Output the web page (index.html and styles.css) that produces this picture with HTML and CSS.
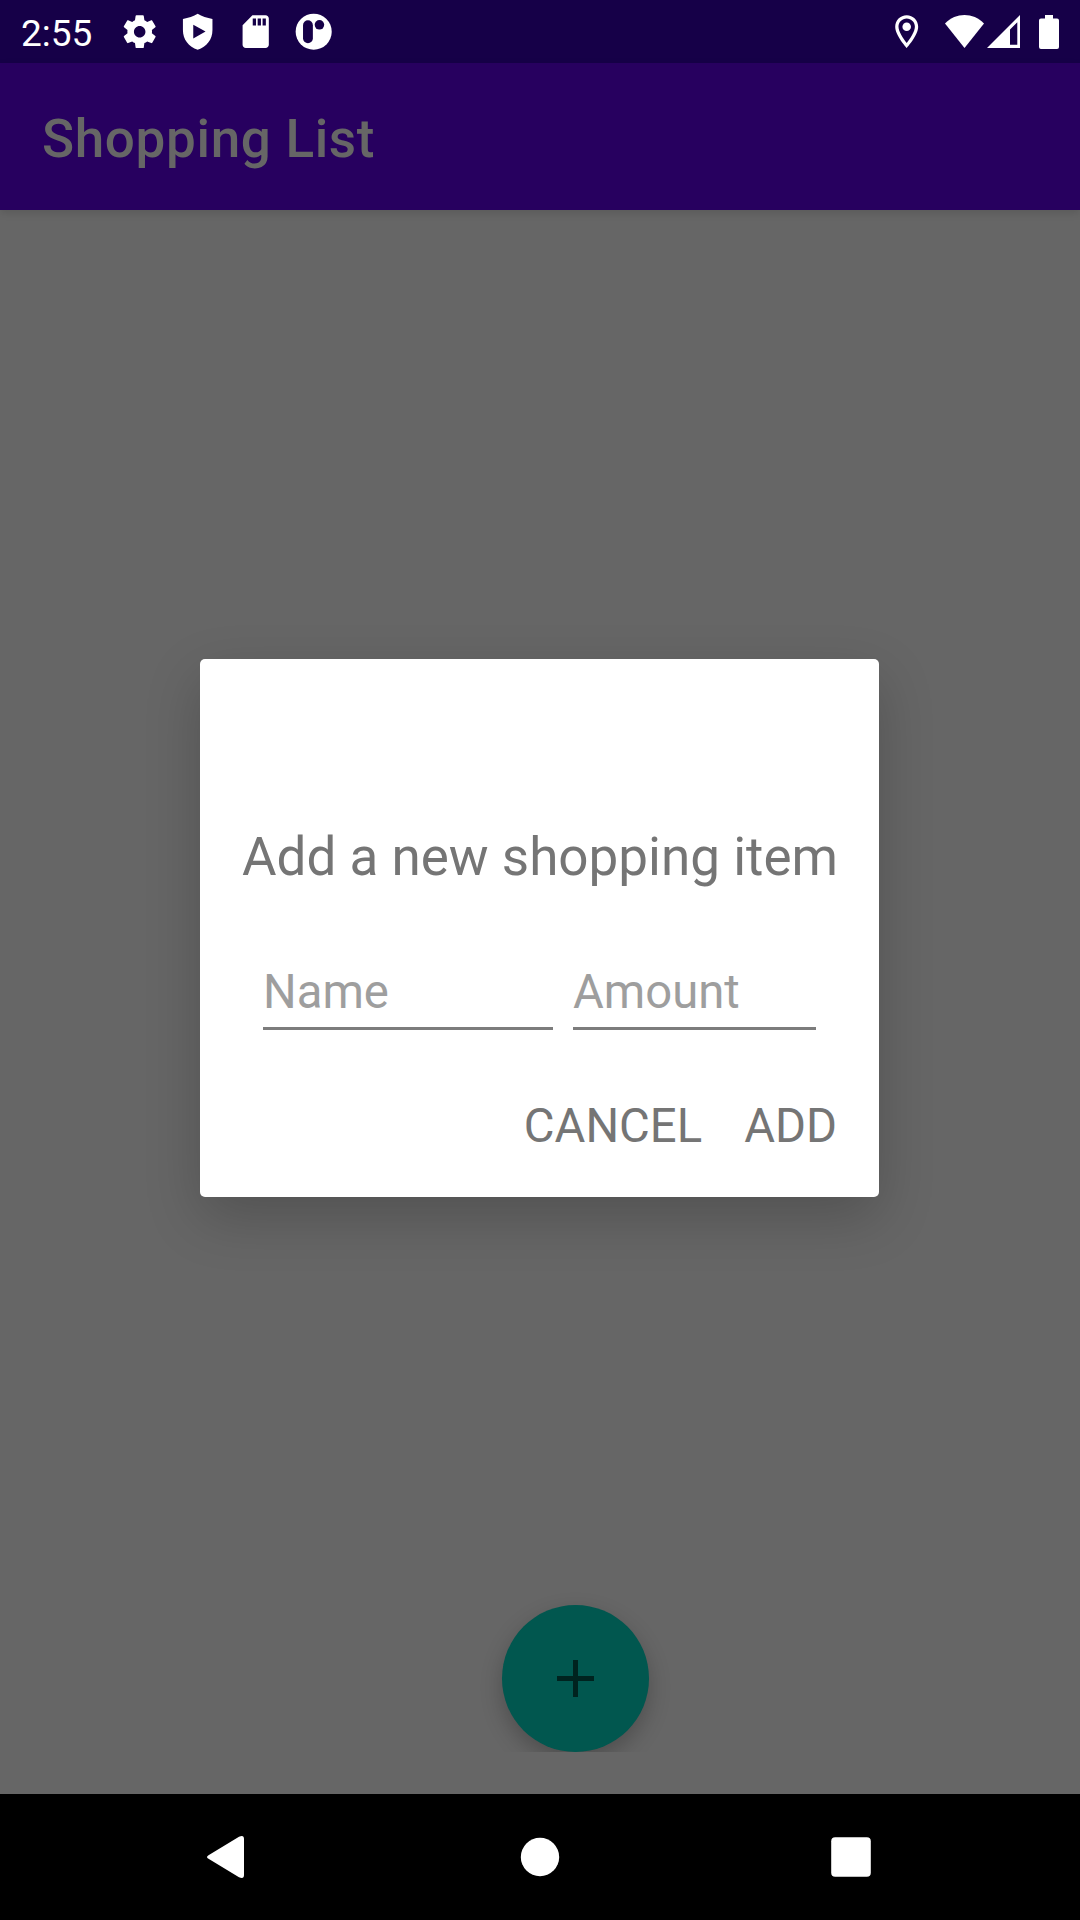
FILE: index.html
```html
<!DOCTYPE html>
<html lang="en">
<head>
<meta charset="utf-8">
<title>Shopping List</title>
<link rel="stylesheet" href="styles.css">
</head>
<body>
<div class="screen">
  <header class="status-bar">
    <span class="clock">2:55</span>
    <div class="notifications">
      <svg class="icon" viewBox="0 0 24 24"><path d="M19.43 12.98c.04-.32.07-.64.07-.98s-.03-.66-.07-.98l2.11-1.65c.19-.15.24-.42.12-.64l-2-3.46c-.12-.22-.39-.3-.61-.22l-2.49 1c-.52-.4-1.08-.73-1.69-.98l-.38-2.65C14.46 2.18 14.25 2 14 2h-4c-.25 0-.46.18-.49.42l-.38 2.65c-.61.25-1.17.59-1.69.98l-2.49-1c-.23-.09-.49 0-.61.22l-2 3.46c-.13.22-.07.49.12.64l2.11 1.65c-.04.32-.07.65-.07.98s.03.66.07.98l-2.11 1.65c-.19.15-.24.42-.12.64l2 3.46c.12.22.39.3.61.22l2.49-1c.52.4 1.08.73 1.69.98l.38 2.65c.03.24.24.42.49.42h4c.25 0 .46-.18.49-.42l.38-2.65c.61-.25 1.17-.59 1.69-.98l2.49 1c.23.09.49 0 .61-.22l2-3.46c.12-.22.07-.49-.12-.64l-2.11-1.65zM12 15.5c-1.93 0-3.5-1.57-3.5-3.5s1.57-3.5 3.5-3.5 3.5 1.57 3.5 3.5-1.57 3.5-3.5 3.5z"/></svg>
      <svg class="icon" viewBox="0 0 24 24"><path fill-rule="evenodd" d="M12 1.1C9.5 2.6 6.300 3.800 3 4.200V11c0 5.900 3.500 10.200 9 12 5.500-1.800 9-6.100 9-12V4.200C17.700 3.800 14.500 2.600 12 1.100zM9.300 7.700l7.500 4.200-7.500 4.200z"/></svg>
      <svg class="icon" viewBox="0 0 24 24"><path fill-rule="evenodd" d="M18 2h-8L4.020 8 4 20c0 1.100.9 2 2 2h12c1.100 0 2-.9 2-2V4c0-1.100-.9-2-2-2zM10.200 4h2v4.200h-2zM13.200 4h2v4.200h-2zM16.200 4h2v4.200h-2z"/></svg>
      <svg class="icon" viewBox="0 0 24 24"><circle cx="12" cy="12" r="11"/><rect class="hole" x="5.500" y="5" width="6" height="14" rx="3"/><circle class="hole" cx="15.500" cy="7.800" r="2.900"/></svg>
    </div>
    <div class="system">
      <svg class="icon location" viewBox="0 0 24 24"><path d="M12 2C8.130 2 5 5.130 5 9c0 5.250 7 13 7 13s7-7.750 7-13c0-3.870-3.130-7-7-7zM7 9c0-2.760 2.240-5 5-5s5 2.240 5 5c0 2.880-2.880 7.190-5 9.880C9.920 16.210 7 11.850 7 9z"/><circle cx="12" cy="9" r="2.600"/></svg>
      <svg class="wifi" viewBox="0 0 39 33"><path d="M0 8.500C11 -2.800 28 -2.800 39 8.500L19.500 33z"/></svg>
      <svg class="signal" viewBox="0 0 33 33"><path fill-rule="evenodd" d="M33 0v33H0zM30.300 7.200L23 14.500V29.800h7.300z"/></svg>
      <svg class="battery" viewBox="0 0 20 34"><path d="M6 0h8v3.500h4a2 2 0 0 1 2 2V32a2 2 0 0 1-2 2H2a2 2 0 0 1-2-2V5.500a2 2 0 0 1 2-2h4z"/></svg>
    </div>
  </header>
  <div class="app-bar"><h1 class="app-title">Shopping List</h1></div>
  <main class="content">
    <button class="fab" aria-label="Add"><svg class="plus" viewBox="0 0 37 37"><path d="M16 0h5v16h16v5H21v16h-5V21H0v-5h16z"/></svg></button>
  </main>
  <nav class="nav-bar">
    <svg class="nav-icon" viewBox="0 0 80 80"><path d="M22.500 38.200L53 19.800Q58 17.500 58 22V58Q58 62.500 53 60.200L22.500 41.800Q19.500 40 22.500 38.200z"/></svg>
    <svg class="nav-icon" viewBox="0 0 80 80"><circle cx="40" cy="40" r="19.200"/></svg>
    <svg class="nav-icon" viewBox="0 0 80 80"><rect x="17.200" y="20.200" width="39.600" height="39.600" rx="4"/></svg>
  </nav>
  <div class="dialog-layer">
    <section class="dialog">
      <h2 class="dialog-title">Add a new shopping item</h2>
      <div class="fields">
        <input class="field name" placeholder="Name">
        <input class="field amount" placeholder="Amount">
      </div>
      <div class="actions"><span>CANCEL</span><span>ADD</span></div>
    </section>
  </div>
</div>
</body>
</html>
```

FILE: styles.css
```css
* { box-sizing: border-box; }
body { margin: 0; font-family: Roboto, "Liberation Sans", sans-serif; }
svg { display: block; }
.screen {
  position: relative;
  display: flex;
  flex-direction: column;
  width: 1080px;
  height: 1920px;
  overflow: hidden;
  background: #666;
}

.status-bar {
  display: flex;
  align-items: center;
  height: 63px;
  padding: 0 21px;
  background: #160048;
  color: #fff;
  fill: #fff;
}
.clock { width: 99.3px; padding-top: 5px; font-size: 37px; line-height: 44px; }
.notifications { display: flex; gap: 18.6px; }
.icon { width: 39.375px; height: 39.375px; }
.hole { fill: #160048; }
.system { display: flex; align-items: center; margin-left: auto; }
.location { margin-right: 19px; }
.wifi { width: 39px; height: 33px; margin-right: 3px; }
.signal { width: 33px; height: 33px; margin-right: 19px; }
.battery { width: 20px; height: 34px; }

.app-bar {
  z-index: 1;
  height: 147px;
  padding: 41px 42px 0;
  background: #27005f;
  box-shadow: 0 3px 8px rgba(0, 0, 0, .12);
}
.app-title { margin: 0; color: #666; font-size: 53px; font-weight: 500; letter-spacing: .0125em; line-height: 70px; }

.content {
  display: flex;
  flex: 1;
  align-items: flex-end;
  padding-left: 502px;
  margin-bottom: 42px;
  overflow: hidden;
}
.fab {
  display: grid;
  place-items: center;
  width: 147px;
  height: 147px;
  padding: 0;
  border: 0;
  border-radius: 50%;
  background: #01574f;
  box-shadow: 0 9px 22px rgba(0, 0, 0, .24);
}
.plus { width: 37px; height: 37px; fill: #00231f; }

.nav-bar {
  display: flex;
  justify-content: space-between;
  height: 126px;
  padding: 23px 186px;
  background: #000;
  fill: #fff;
}
.nav-icon { width: 80px; height: 80px; }

.dialog-layer {
  position: absolute;
  z-index: 2;
  inset: 63px 1px 127px 0;
  display: grid;
  place-items: center;
}
.dialog {
  width: 679px;
  height: 538px;
  padding: 163px 42px 0;
  border-radius: 5px;
  background: #fff;
  box-shadow: 0 20px 56px rgba(0, 0, 0, .2);
  color: #757575;
}
.dialog-title { margin: 0; font-size: 53px; font-weight: 400; line-height: 70px; white-space: nowrap; }
.fields { display: flex; gap: 20px; padding: 72px 21px 0; }
.field {
  height: 66px;
  padding: 0 0 7px;
  border: 0;
  border-bottom: 3px solid #7c7c7c;
  border-radius: 0;
  background: transparent;
  font: 47.25px/56px Roboto, "Liberation Sans", sans-serif;
}
.field::placeholder { color: #9e9e9e; }
.name { width: 290px; }
.amount { width: 243px; }
.actions { display: flex; justify-content: flex-end; gap: 42px; padding-top: 68px; font-size: 47.25px; line-height: 56px; }
```
